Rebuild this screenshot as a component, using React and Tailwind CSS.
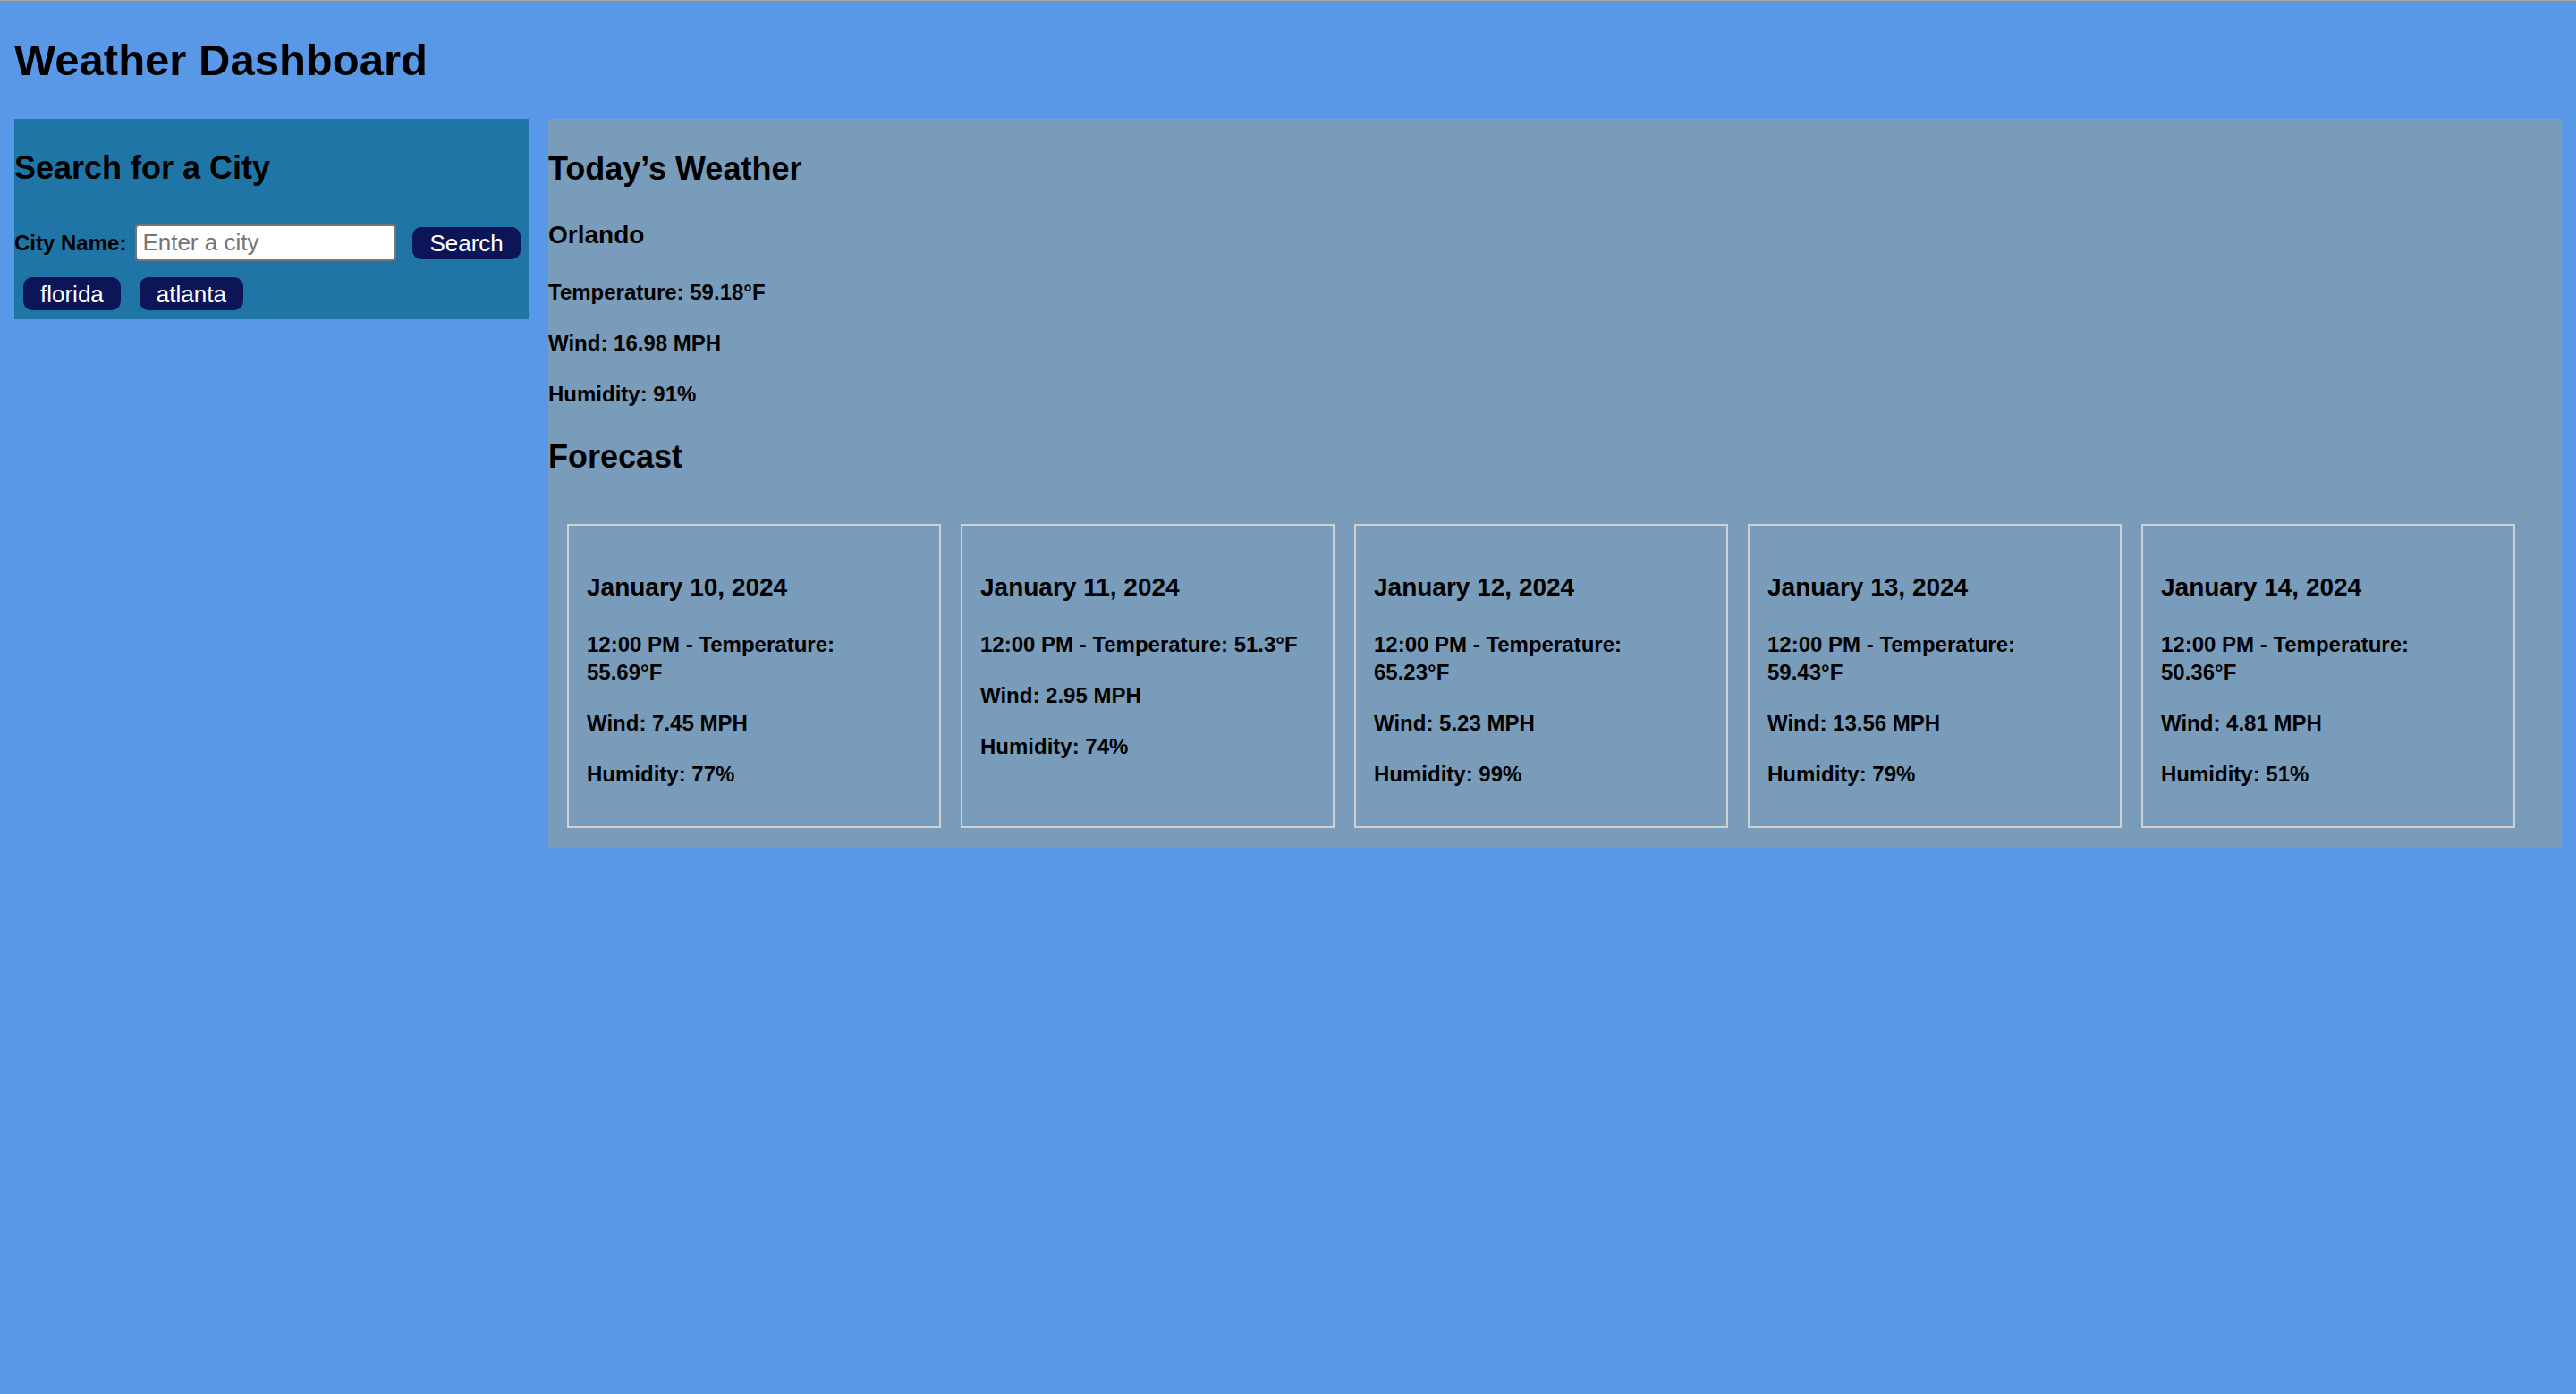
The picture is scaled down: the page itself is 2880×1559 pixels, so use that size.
import { useState } from 'react'

const FORECAST = [
  { date: 'January 10, 2024', temp: '55.69', wind: '7.45', humidity: 77 },
  { date: 'January 11, 2024', temp: '51.3', wind: '2.95', humidity: 74 },
  { date: 'January 12, 2024', temp: '65.23', wind: '5.23', humidity: 99 },
  { date: 'January 13, 2024', temp: '59.43', wind: '13.56', humidity: 79 },
  { date: 'January 14, 2024', temp: '50.36', wind: '4.81', humidity: 51 },
]

const HISTORY = ['florida', 'atlanta']

function ForecastCard({ day }) {
  return (
    <div className="w-[418px] shrink-0 border-2 border-[#d0d0d0] pt-[55px] pb-[43px] pl-[20px] pr-[31px]">
      <h3 className="text-[28px] leading-[28px] font-bold">{day.date}</h3>
      <p className="mt-[34px] text-[24px] leading-[31px] font-bold">12:00 PM - Temperature: {day.temp}°F</p>
      <p className="mt-[26px] text-[24px] leading-[31px] font-bold">Wind: {day.wind} MPH</p>
      <p className="mt-[26px] text-[24px] leading-[31px] font-bold">Humidity: {day.humidity}%</p>
    </div>
  )
}

function CityButton({ children }) {
  return (
    <button className="h-[37px] px-[19px] rounded-[10px] bg-[#0d1559] text-white text-[26px] leading-none font-['Liberation_Sans',Arial,sans-serif]">
      {children}
    </button>
  )
}

export default function App() {
  const [city, setCity] = useState('')

  return (
    <div className="min-h-screen bg-[#5898e6] border-t border-[#aaa6a2] px-[16px] text-black font-['Liberation_Sans',Arial,sans-serif]">
      <h1 className="mt-[42px] mb-[41px] text-[49px] leading-[49px] font-bold">Weather Dashboard</h1>

      <div className="flex items-start gap-[22px]">
        <aside className="w-[575px] shrink-0 bg-[#1f76a6] pt-[37px] pb-[10px]">
          <h2 className="text-[36px] leading-[36px] font-bold">Search for a City</h2>
          <div className="mt-[45px] flex h-[41px] items-center">
            <label className="text-[24px] leading-[24px] font-bold">City Name:</label>
            <input
              value={city}
              onChange={(e) => setCity(e.target.value)}
              placeholder="Enter a city"
              className="ml-[10px] h-[41px] w-[292px] rounded-[4px] border-2 border-[#767676] bg-white px-[6px] text-[26px] text-black placeholder:text-[#757575] outline-none"
            />
            <button className="ml-[18px] h-[36px] px-[19px] rounded-[10px] bg-[#0d1559] text-white text-[26px] leading-none">
              Search
            </button>
          </div>
          <div className="mt-[18px] flex gap-[21px] pl-[10px]">
            {HISTORY.map((c) => (
              <CityButton key={c}>{c}</CityButton>
            ))}
          </div>
        </aside>

        <main className="flex-1 bg-[#799cbb] pt-[38px] pb-[22px]">
          <h2 className="text-[36px] leading-[36px] font-bold">Today’s Weather</h2>
          <h3 className="mt-[42px] text-[28px] leading-[28px] font-bold">Orlando</h3>
          <p className="mt-[34px] text-[24px] leading-[31px] font-bold">Temperature: 59.18°F</p>
          <p className="mt-[26px] text-[24px] leading-[31px] font-bold">Wind: 16.98 MPH</p>
          <p className="mt-[26px] text-[24px] leading-[31px] font-bold">Humidity: 91%</p>
          <h2 className="mt-[37px] text-[36px] leading-[36px] font-bold">Forecast</h2>
          <div className="mt-[57px] flex gap-[22px] pl-[21px]">
            {FORECAST.map((d) => (
              <ForecastCard key={d.date} day={d} />
            ))}
          </div>
        </main>
      </div>
    </div>
  )
}
